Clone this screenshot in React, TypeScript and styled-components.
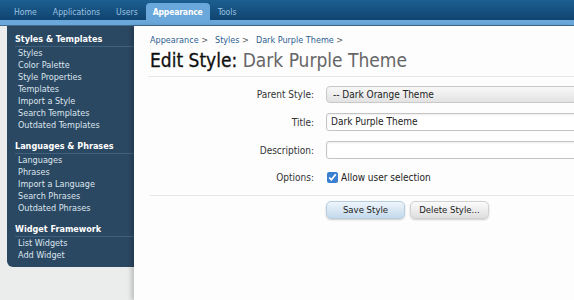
import React from 'react';
import styled, { createGlobalStyle } from 'styled-components';

const GlobalStyle = createGlobalStyle`
  html, body {
    margin: 0;
    padding: 0;
    background: #fdfdfe;
    font-family: 'DejaVu Sans Condensed', 'Liberation Sans', sans-serif;
  }
  #root {
    width: 574px;
    height: 300px;
    overflow: hidden;
  }
`;

const Page = styled.div`
  display: flex;
  flex-direction: column;
  height: 300px;
`;

const TopNav = styled.div`
  display: flex;
  align-items: flex-end;
  height: 20px;
  padding-left: 6px;
  background: linear-gradient(#1c5f90, #104470);
`;

const Tab = styled.div<{ $active?: boolean }>`
  padding: ${(p) => (p.$active ? '0 7px' : '0 8px')};
  height: ${(p) => (p.$active ? '17px' : '16px')};
  line-height: ${(p) => (p.$active ? '18px' : '16px')};
  font-size: 8.6px;
  font-weight: ${(p) => (p.$active ? 'bold' : 'normal')};
  letter-spacing: ${(p) => (p.$active ? '-0.2px' : '0')};
  color: ${(p) => (p.$active ? '#ffffff' : '#9dc2e2')};
  background: ${(p) => (p.$active ? '#6aa7da' : 'transparent')};
  border-radius: 4px 4px 0 0;
`;

const Strip = styled.div`
  height: 5px;
  background: #6aa7da;
  border-bottom: 1px solid #3f6d8f;
`;

const Body = styled.div`
  flex: 1;
  display: flex;
  min-height: 0;
`;

const LeftColumn = styled.div`
  width: 134px;
  flex-shrink: 0;
  background: #ebecec;
  padding-left: 7px;
  box-sizing: border-box;
`;

const Sidebar = styled.div`
  background: #2b4862;
  border-radius: 0 0 0 6px;
  padding: 7px 0 6px 8px;
`;

const Section = styled.div`
  & + & {
    margin-top: 9px;
  }
`;

const SectionTitle = styled.div`
  font-size: 9px;
  font-weight: bold;
  color: #ffffff;
  line-height: 12px;
  padding-bottom: 1px;
  border-bottom: 1px solid #40627f;
`;

const SideLink = styled.div`
  font-size: 9px;
  line-height: 12px;
  color: #dbe5ee;
  padding-left: 3px;
`;

const Content = styled.div`
  flex: 1;
  min-width: 0;
  background: #fdfdfe;
  box-shadow: -3px 0 4px rgba(0, 0, 0, 0.18);
  padding: 8px 0 0 16px;
`;

const Breadcrumb = styled.div`
  display: flex;
  gap: 7px;
  font-size: 9px;
  line-height: 12px;
  color: #2e5f8f;
`;

const Crumb = styled.span`
  &::after {
    content: ' >';
    color: #555;
  }
`;

const TitleBar = styled.div`
  margin-top: 2px;
  padding-bottom: 4px;
  border-bottom: 1px solid #e3e8ec;
  margin-left: -2px;
  padding-left: 2px;
`;

const Title = styled.h1`
  margin: 0;
  font-size: 19px;
  line-height: 24px;
  font-weight: normal;
  color: #111111;
  white-space: nowrap;
  -webkit-text-stroke: 0.3px #111111;
`;

const TitleName = styled.span`
  color: #666666;
  -webkit-text-stroke: 0;
`;

const Form = styled.div`
  display: grid;
  grid-template-columns: 164px 300px;
  column-gap: 12px;
  row-gap: 10px;
  align-items: center;
  padding-top: 9px;
`;

const Label = styled.div`
  text-align: right;
  font-size: 10px;
  color: #333;
`;

const SelectBox = styled.div`
  height: 17px;
  box-sizing: border-box;
  border: 1px solid #c8c8c8;
  border-radius: 4px;
  background: linear-gradient(#f8f8f8, #e2e2e2);
  font-size: 10px;
  line-height: 15px;
  padding-left: 6px;
  color: #222;
`;

const TextBox = styled.div`
  height: 18px;
  box-sizing: border-box;
  border: 1px solid #c4c4c4;
  border-radius: 3px;
  background: #fff;
  box-shadow: inset 0 1px 2px rgba(0, 0, 0, 0.08);
  font-size: 10px;
  line-height: 16px;
  padding-left: 4px;
  color: #222;
`;

const CheckRow = styled.label`
  display: flex;
  align-items: center;
  gap: 3px;
  font-size: 10px;
  color: #222;
  height: 17px;
`;

const Check = styled.input`
  margin: 0 0 0 1px;
  width: 11px;
  height: 11px;
  accent-color: #3b7fd0;
`;

const Divider = styled.div`
  border-top: 1px solid #e3e8ec;
  margin-top: 9px;
`;

const Buttons = styled.div`
  display: flex;
  gap: 5px;
  padding: 5px 0 0 176px;
`;

const Button = styled.div<{ $primary?: boolean }>`
  width: 79px;
  height: 18px;
  box-sizing: border-box;
  border-radius: 5px;
  border: 1px solid ${(p) => (p.$primary ? '#b6cde0' : '#d0d0d0')};
  background: ${(p) =>
    p.$primary ? 'linear-gradient(#eef5fb, #c3d9ec)' : 'linear-gradient(#fbfbfb, #dedede)'};
  box-shadow: 0 1px 2px rgba(0, 0, 0, 0.2);
  font-size: 9.5px;
  line-height: 16px;
  text-align: center;
  color: #222;
`;

const sections = [
  {
    title: 'Styles & Templates',
    links: ['Styles', 'Color Palette', 'Style Properties', 'Templates', 'Import a Style', 'Search Templates', 'Outdated Templates'],
  },
  {
    title: 'Languages & Phrases',
    links: ['Languages', 'Phrases', 'Import a Language', 'Search Phrases', 'Outdated Phrases'],
  },
  {
    title: 'Widget Framework',
    links: ['List Widgets', 'Add Widget'],
  },
];

const tabs = ['Home', 'Applications', 'Users', 'Appearance', 'Tools'];

const App: React.FC = () => {
  return (
    <Page>
      <GlobalStyle />
      <TopNav>
        {tabs.map((t) => (
          <Tab key={t} $active={t === 'Appearance'}>
            {t}
          </Tab>
        ))}
      </TopNav>
      <Strip />
      <Body>
        <LeftColumn>
          <Sidebar>
            {sections.map((s) => (
              <Section key={s.title}>
                <SectionTitle>{s.title}</SectionTitle>
                {s.links.map((l) => (
                  <SideLink key={l}>{l}</SideLink>
                ))}
              </Section>
            ))}
          </Sidebar>
        </LeftColumn>
        <Content>
          <Breadcrumb>
            <Crumb>Appearance</Crumb>
            <Crumb>Styles</Crumb>
            <Crumb>Dark Purple Theme</Crumb>
          </Breadcrumb>
          <TitleBar>
            <Title>
              Edit Style: <TitleName>Dark Purple Theme</TitleName>
            </Title>
          </TitleBar>
          <Form>
            <Label>Parent Style:</Label>
            <SelectBox>-- Dark Orange Theme</SelectBox>
            <Label>Title:</Label>
            <TextBox>Dark Purple Theme</TextBox>
            <Label>Description:</Label>
            <TextBox />
            <Label>Options:</Label>
            <CheckRow>
              <Check type="checkbox" defaultChecked />
              Allow user selection
            </CheckRow>
          </Form>
          <Divider />
          <Buttons>
            <Button $primary>Save Style</Button>
            <Button>Delete Style...</Button>
          </Buttons>
        </Content>
      </Body>
    </Page>
  );
};

export default App;
